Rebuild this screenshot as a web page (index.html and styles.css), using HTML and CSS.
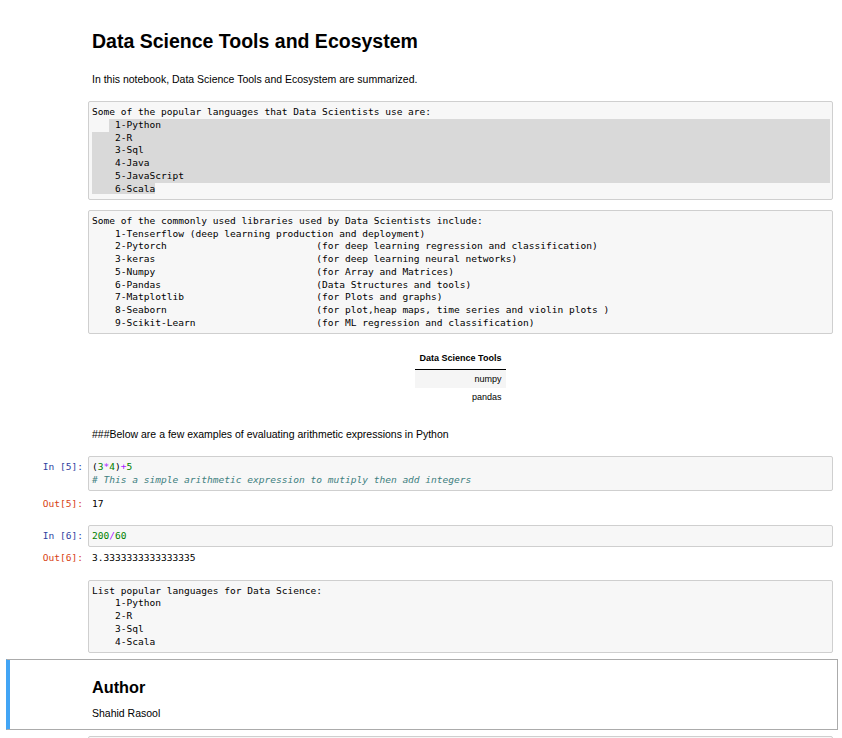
FILE: index.html
```html
<!DOCTYPE html>
<html>
<head>
<meta charset="utf-8">
<link rel="stylesheet" href="styles.css">
</head>
<body>
<div class="nb">
  <div class="cell">
    <div class="prompt"></div>
    <div class="inner md">
      <h1 class="title">Data Science Tools and Ecosystem</h1>
      <p class="para intro">In this notebook, Data Science Tools and Ecosystem are summarized.</p>
      <div class="box box1">
<div class="ln">Some of the popular languages that Data Scientists use are:</div>
<div class="ln sel-start"><span>   </span><span class="sel fill"> 1-Python</span></div>
<div class="ln sel">    2-R</div>
<div class="ln sel">    3-Sql</div>
<div class="ln sel">    4-Java</div>
<div class="ln sel">    5-JavaScript</div>
<div class="ln"><span class="sel">    6-Scala</span></div>
      </div>
      <div class="box box2">
<div class="ln">Some of the commonly used libraries used by Data Scientists include:</div>
<div class="ln">    1-Tenserflow (deep learning production and deployment)</div>
<div class="ln">    2-Pytorch                          (for deep learning regression and classification)</div>
<div class="ln">    3-keras                            (for deep learning neural networks)</div>
<div class="ln">    5-Numpy                            (for Array and Matrices)</div>
<div class="ln">    6-Pandas                           (Data Structures and tools)</div>
<div class="ln">    7-Matplotlib                       (for Plots and graphs)</div>
<div class="ln">    8-Seaborn                          (for plot,heap maps, time series and violin plots )</div>
<div class="ln">    9-Scikit-Learn                     (for ML regression and classification)</div>
      </div>
      <table class="tools">
        <thead><tr><th>Data Science Tools</th></tr></thead>
        <tbody>
          <tr class="odd"><td>numpy</td></tr>
          <tr><td>pandas</td></tr>
        </tbody>
      </table>
      <p class="para below">###Below are a few examples of evaluating arithmetic expressions in Python</p>
    </div>
  </div>

  <div class="cell code c5">
    <div class="prompt in">In&nbsp;[5]:</div>
    <div class="inner">
      <div class="box">
<div class="ln">(<span class="num">3</span><span class="op">*</span><span class="num">4</span>)<span class="op">+</span><span class="num">5</span></div>
<div class="ln cmt"># This a simple arithmetic expression to mutiply then add integers</div>
      </div>
    </div>
  </div>
  <div class="cell out o5">
    <div class="prompt outp">Out[5]:</div>
    <div class="inner"><div class="ln res">17</div></div>
  </div>

  <div class="cell code c6">
    <div class="prompt in">In&nbsp;[6]:</div>
    <div class="inner">
      <div class="box">
<div class="ln"><span class="num">200</span><span class="op">/</span><span class="num">60</span></div>
      </div>
    </div>
  </div>
  <div class="cell out o6">
    <div class="prompt outp">Out[6]:</div>
    <div class="inner"><div class="ln res">3.3333333333333335</div></div>
  </div>

  <div class="cell raw">
    <div class="prompt"></div>
    <div class="inner">
      <div class="box">
<div class="ln">List popular languages for Data Science:</div>
<div class="ln">    1-Python</div>
<div class="ln">    2-R</div>
<div class="ln">    3-Sql</div>
<div class="ln">    4-Scala</div>
      </div>
    </div>
  </div>

  <div class="cell selected">
    <div class="prompt"></div>
    <div class="inner md">
      <h2 class="author">Author</h2>
      <p class="para name">Shahid Rasool</p>
    </div>
  </div>

  <div class="cell raw last">
    <div class="prompt"></div>
    <div class="inner">
      <div class="box tail"></div>
    </div>
  </div>
</div>
</body>
</html>
```
FILE: styles.css
```css
html, body {
  margin: 0;
  padding: 0;
  background: #fff;
  overflow: hidden;
  height: 738px;
}
body {
  font-family: "Liberation Sans", Arial, sans-serif;
  color: #000;
}
.nb {
  width: 832px;
  margin-left: 6px;
}
.cell {
  display: flex;
  border: 1px solid transparent;
  padding: 0 4px;
}
.prompt {
  flex: none;
  width: 77px;
  box-sizing: border-box;
  padding-right: 5px;
  text-align: right;
  font-family: "DejaVu Sans Mono", monospace;
  font-size: 9.55px;
  line-height: 12.75px;
  white-space: nowrap;
}
.inner {
  flex: 1;
  min-width: 0;
}
.md .title,
.md .para,
.md .author {
  padding-left: 4px;
}
.title {
  margin: 29px 0 0;
  font-size: 19.5px;
  line-height: 23px;
  font-weight: bold;
}
.para {
  margin: 0;
  font-size: 10.5px;
  line-height: 13px;
}
.intro {
  margin-top: 20px;
}
.box {
  background: #f7f7f7;
  border: 1px solid #cfcfcf;
  border-radius: 2px;
  padding: 4px 2px 3.25px 3px;
  font-family: "DejaVu Sans Mono", monospace;
  font-size: 9.55px;
}
.ln {
  height: 12.75px;
  line-height: 12.75px;
  white-space: pre;
  font-family: "DejaVu Sans Mono", monospace;
  font-size: 9.55px;
}
.box1 {
  margin-top: 15px;
  padding-bottom: 3.5px;
}
.box2 {
  margin-top: 10px;
  padding-bottom: 3.5px;
}
.sel {
  background: #d9d9d9;
}
.sel-start {
  display: flex;
}
.sel-start .fill {
  flex: 1;
}
.tools {
  margin: 16px auto 0;
  border-collapse: collapse;
  font-size: 9px;
}
.tools th {
  padding: 3px 5px 5px;
  line-height: 11px;
  font-weight: bold;
  text-align: right;
  border-bottom: 1px solid #000;
}
.tools td {
  padding: 3.5px 5px;
  line-height: 11px;
  text-align: right;
}
.tools .odd td {
  background: #f5f5f5;
}
.below {
  margin-top: 22px;
}
.c5 {
  margin-top: 13px;
}
.code .prompt {
  padding-top: 5px;
}
.in {
  color: #303f9f;
}
.outp {
  color: #d84315;
}
.num {
  color: #008000;
}
.op {
  color: #aa22ff;
}
.cmt {
  color: #408080;
  font-style: italic;
}
.o5 {
  margin-top: 5.6px;
}
.res {
  padding-left: 4px;
}
.c6 {
  margin-top: 11.65px;
}
.o6 {
  margin-top: 3.6px;
}
.raw {
  margin-top: 12.65px;
}
.selected {
  margin-top: 5px;
  border-color: #ababab;
  border-left-color: #42a5f5;
  box-shadow: inset 3px 0 0 #42a5f5;
  padding-bottom: 9px;
}
.author {
  margin: 18px 0 0;
  font-size: 16.3px;
  line-height: 19px;
  font-weight: bold;
}
.name {
  margin-top: 10px;
}
.last {
  margin-top: 5px;
}
.tail {
  height: 30px;
}
```
